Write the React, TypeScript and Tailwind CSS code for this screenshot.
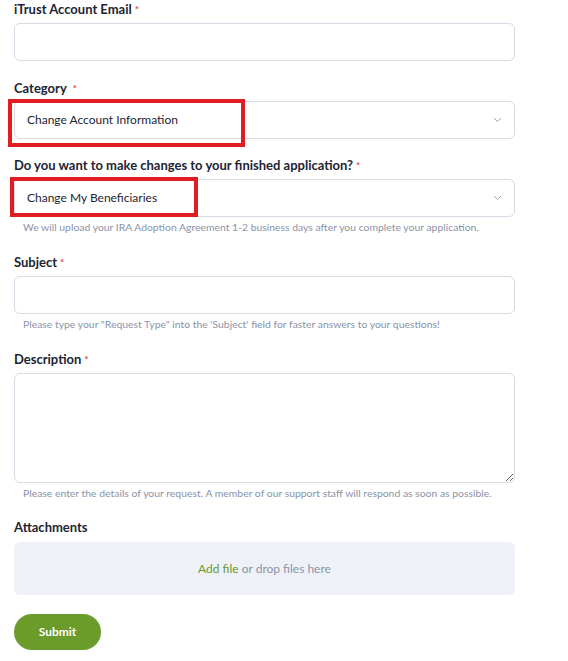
import React from 'react';

const Req = ({ wide }: { wide?: boolean }) => (
  <span className={`text-[#e5484d] text-[10px] align-top ${wide ? 'ml-[6px]' : 'ml-[3px]'}`}>*</span>
);

const Label = ({ text, required = true, wide }: { text: string; required?: boolean; wide?: boolean }) => (
  <div className="h-[18px] leading-[18px] text-[13px] font-bold text-[#1d2433]">
    {text}
    {required && <Req wide={wide} />}
  </div>
);

const Hint = ({ text }: { text: string }) => (
  <div className="mt-[2px] h-[16px] leading-[16px] pl-[9px] text-[10.4px] text-[#8a93a7] whitespace-nowrap">{text}</div>
);

const Select = ({ value }: { value: string }) => (
  <div className="h-[38px] rounded-[6px] border border-[#d6dbe5] bg-white flex items-center justify-between pl-[12px] pr-[12px]">
    <span className="text-[12px] text-[#1d2433]">{value}</span>
    <svg width="9" height="6" viewBox="0 0 9 6" fill="none">
      <path d="M1 1l3.5 3.5L8 1" stroke="#9ba2b1" strokeWidth="1" />
    </svg>
  </div>
);

export default function App() {
  return (
    <div className="relative w-[568px] h-[661px] bg-white px-[14px] pr-[53px]" style={{ fontFamily: 'Lato, "Open Sans", sans-serif' }}>
      <Label text="iTrust Account Email" />
      <div className="mt-[5px] h-[38px] rounded-[6px] border border-[#d6dbe5]" />

      <div className="mt-[18px]">
        <Label text="Category" wide />
        <div className="mt-[4px]">
          <Select value="Change Account Information" />
        </div>
      </div>

      <div className="mt-[17px]">
        <Label text="Do you want to make changes to your finished application?" />
        <div className="mt-[5px]">
          <Select value="Change My Beneficiaries" />
        </div>
        <Hint text="We will upload your IRA Adoption Agreement 1-2 business days after you complete your application." />
      </div>

      <div className="mt-[18px]">
        <Label text="Subject" />
        <div className="mt-[5px] h-[38px] rounded-[6px] border border-[#d6dbe5]" />
        <Hint text={`Please type your "Request Type" into the 'Subject' field for faster answers to your questions!`} />
      </div>

      <div className="mt-[18px]">
        <Label text="Description" />
        <textarea className="mt-[5px] block w-full h-[110px] rounded-[6px] border border-[#d6dbe5] outline-none" />
        <Hint text="Please enter the details of your request. A member of our support staff will respond as soon as possible." />
      </div>

      <div className="mt-[17px]">
        <Label text="Attachments" required={false} />
        <div className="mt-[6px] h-[53px] rounded-[6px] bg-[#eef1f8] flex items-center justify-center text-[12px]">
          <span className="text-[#6b9a2c]">Add file</span>
          <span className="text-[#8a93a7]">&nbsp;or drop files here</span>
        </div>
      </div>

      <button className="mt-[19px] w-[87px] h-[36px] rounded-full bg-[#6a9b2b] text-white text-[12px] font-bold">
        Submit
      </button>

      <div className="absolute left-[8px] top-[99px] w-[237px] h-[48px] border-[4px] border-[#e11d24]" />
      <div className="absolute left-[10px] top-[177px] w-[188px] h-[40px] border-[4px] border-[#e11d24]" />
    </div>
  );
}
